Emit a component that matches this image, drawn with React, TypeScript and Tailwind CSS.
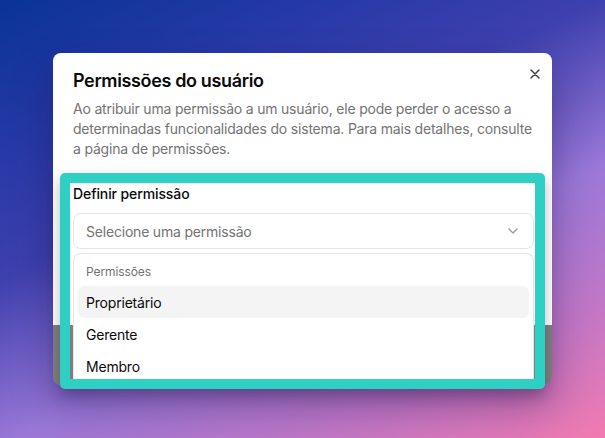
import { ChevronDown } from "lucide-react";

const items = ["Proprietário", "Gerente", "Membro"];

export default function App() {
  return (
    <div className="h-[438px] w-[605px] overflow-hidden bg-[linear-gradient(155deg,#0a3397_0%,#2a3aa8_24%,#3e40ae_39%,#9a78d8_62%,#c377c6_82%,#f27ab0_100%)] pl-[53px] pt-[53px] font-['Inter',sans-serif]">
      <div className="relative w-[499px] rounded-lg shadow-[0_20px_40px_rgba(20,10,60,0.35)]">
        <div className="h-[272px] rounded-t-lg bg-white px-5 pt-[14px]">
          <h2 className="text-[18px] leading-7 font-semibold tracking-[-0.02em] text-[#0a0a0a]">
            Permissões do usuário
          </h2>
          <p className="mt-1 text-[14px] leading-5 tracking-[-0.2px] text-[#737373]">
            Ao atribuir uma permissão a um usuário, ele pode perder o acesso a
            determinadas funcionalidades do sistema. Para mais detalhes,
            consulte a página de permissões.
          </p>
          <label className="mt-[25px] block text-sm leading-5 font-medium tracking-[-0.1px] text-[#0a0a0a]">
            Definir permissão
          </label>
          <div className="mt-[9px] flex h-9 w-[461px] items-center justify-between rounded-lg border border-[#e5e5e5] px-3">
            <span className="text-[14px] tracking-[-0.2px] text-[#737373]">
              Selecione uma permissão
            </span>
            <ChevronDown className="h-4 w-4 text-[#0a0a0a] opacity-40" />
          </div>
        </div>
        <div className="h-[60px] rounded-b-lg bg-[#7f7f7f]" />

        <button className="absolute right-[9px] top-[13px] flex h-4 w-4 items-center justify-center text-[#3f3f46]">
          <svg width="10" height="10" viewBox="0 0 10 10" fill="none">
            <path
              d="M1 1L9 9M9 1L1 9"
              stroke="currentColor"
              strokeWidth="1.5"
              strokeLinecap="round"
            />
          </svg>
        </button>

        <div className="absolute left-5 top-[200px] h-[132px] w-[461px] overflow-hidden rounded-t-lg border border-b-0 border-[#e5e5e5] bg-white p-1">
          <div className="px-2 py-1.5 text-xs leading-4 tracking-[-0.1px] text-[#737373]">
            Permissões
          </div>
          {items.map((item, i) => (
            <div
              key={item}
              className={
                i === 0
                  ? "flex h-8 items-center rounded-md bg-[#f4f4f5] px-2 text-[14px] tracking-[-0.2px] text-[#0a0a0a]"
                  : "flex h-8 items-center rounded-md px-2 text-[14px] tracking-[-0.2px] text-[#0a0a0a]"
              }
            >
              {item}
            </div>
          ))}
        </div>

        <div className="pointer-events-none absolute left-[7px] top-[120px] h-[216px] w-[485px] rounded-[5px] border-[10px] border-[#2fd0c4] shadow-[0_6px_14px_rgba(30,20,70,0.3)]" />
      </div>
    </div>
  );
}
